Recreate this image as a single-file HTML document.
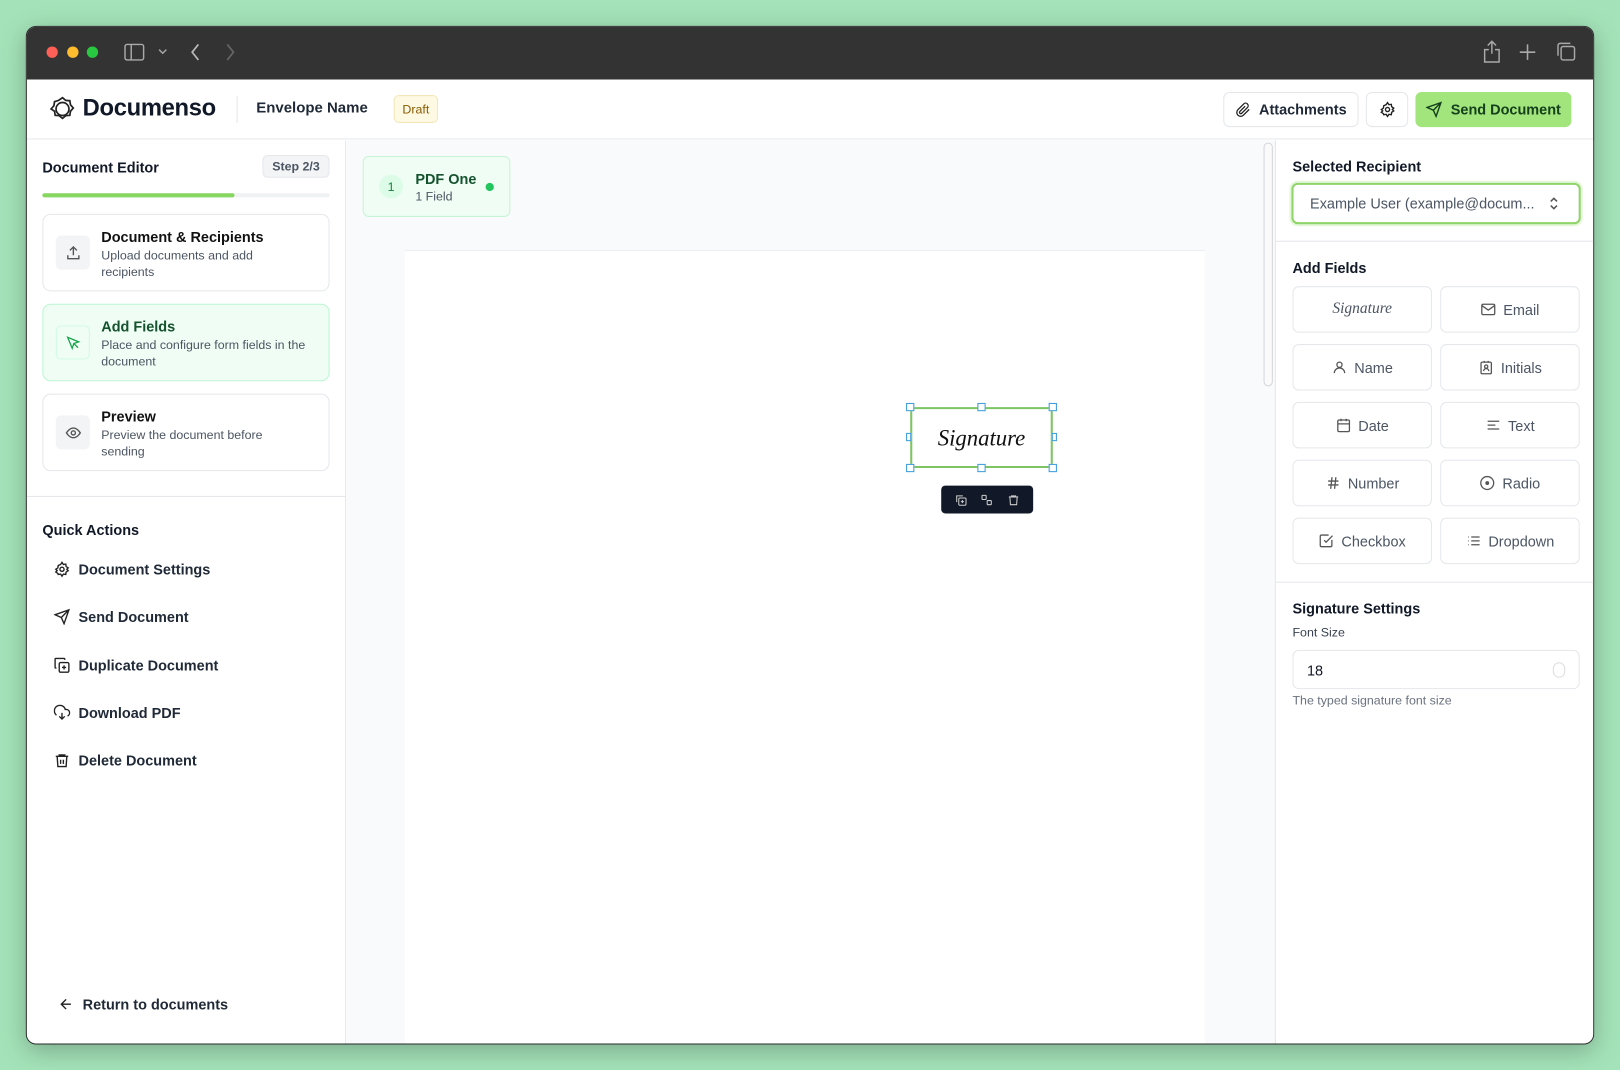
<!DOCTYPE html>
<html><head><meta charset="utf-8"><style>
*{box-sizing:border-box;margin:0;padding:0}
html,body{width:1620px;height:1070px;overflow:hidden;background:#a4e3b9;font-family:"Liberation Sans",sans-serif;color:#111827}
#w{position:absolute;left:0;top:0;width:1568px;height:1036px;transform:scale(1.03316);transform-origin:0 0}
.a{position:absolute}
.win{left:25px;top:25px;width:1518px;height:986px;border-radius:10px;overflow:hidden;background:#fff;box-shadow:0 6px 24px rgba(0,0,0,.25);border:1px solid #2a2a2a}
.tb{left:0;top:0;width:100%;height:51px;background:#333}
.dot{width:11px;height:11px;border-radius:50%;top:19px}
.card{left:15px;width:278px;border:1px solid #e5e7eb;border-radius:8px;background:#fff}
.ib{left:12px;width:33px;height:33px;border-radius:5px;background:#f3f4f6;display:flex;align-items:center;justify-content:center}
.ct{left:56px;font-size:14px;font-weight:bold;color:#111}
.cd{left:56px;font-size:12px;color:#4b5563;line-height:16px;width:200px}
.qa{left:26px;font-size:14px;font-weight:bold;color:#1f2937;display:flex;align-items:center;gap:8px}
.fb{width:135px;height:45px;border:1px solid #e5e7eb;border-radius:6px;display:flex;align-items:center;justify-content:center;gap:7px;font-size:14px;color:#4b5563}
.h{width:8px;height:8px;border:1px solid #3b9bd9;background:#fff}
svg{display:block}
</style></head><body><div id="w">
<div class="a win">
 <div class="a tb">
  <div class="a dot" style="left:19px;background:#fe5f57"></div>
  <div class="a dot" style="left:39px;background:#febc2e"></div>
  <div class="a dot" style="left:58px;background:#28c840"></div>
  <svg class="a" style="left:94px;top:16px" width="20" height="17" viewBox="0 0 20 17" fill="none" stroke="#aaa" stroke-width="1.4"><rect x="1" y="1" width="18" height="15" rx="2"/><path d="M7 1v15"/></svg>
  <svg class="a" style="left:127px;top:21px" width="9" height="6" viewBox="0 0 9 6" fill="none" stroke="#aaa" stroke-width="1.4"><path d="M1 1l3.5 3.5L8 1"/></svg>
  <svg class="a" style="left:158px;top:16px" width="10" height="17" viewBox="0 0 10 17" fill="none" stroke="#bbb" stroke-width="1.6"><path d="M8 1L2 8.5 8 16"/></svg>
  <svg class="a" style="left:192px;top:16px" width="10" height="17" viewBox="0 0 10 17" fill="none" stroke="#666" stroke-width="1.6"><path d="M2 1l6 7.5L2 16"/></svg>
  <svg class="a" style="left:1409px;top:13px" width="18" height="22" viewBox="0 0 18 22" fill="none" stroke="#aaa" stroke-width="1.4"><path d="M9 1v12M5 5l4-4 4 4M6 9H2v12h14V9h-4"/></svg>
  <svg class="a" style="left:1444px;top:16px" width="17" height="17" viewBox="0 0 17 17" stroke="#aaa" stroke-width="1.5"><path d="M8.5 1v15M1 8.5h15"/></svg>
  <svg class="a" style="left:1480px;top:14px" width="20" height="20" viewBox="0 0 20 20" fill="none" stroke="#aaa" stroke-width="1.4"><rect x="5" y="5" width="13" height="13" rx="2"/><path d="M2 14V4a2 2 0 0 1 2-2h10"/></svg>
 </div>
 <!-- header -->
 <div class="a" style="left:0;top:51px;width:100%;height:58px;border-bottom:1px solid #e5e7eb;background:#fff">
  <svg class="a" style="left:22px;top:16px" width="25" height="25" viewBox="0 0 24 24" fill="none" stroke="#222" stroke-width="1.6"><path d="M12 1.5l3 2.5 3.8.3.6 3.8 2.6 3-2.6 3-.6 3.8-3.8.3-3 2.5-3-2.5-3.8-.3-.6-3.8L1.4 12 4 9l.6-3.8L8.4 4z"/><circle cx="12" cy="12" r="6"/></svg>
  <div class="a" style="left:54px;top:14px;font-size:23px;font-weight:bold;letter-spacing:-.3px">Documenso</div>
  <div class="a" style="left:203px;top:16px;width:1px;height:26px;background:#e5e7eb"></div>
  <div class="a" style="left:222px;top:20px;font-size:14.5px;font-weight:bold;color:#1f2937">Envelope Name</div>
  <div class="a" style="left:355px;top:15px;width:43px;height:27px;background:#fef9e3;border:1px solid #f3e7b8;border-radius:5px;font-size:12px;color:#8a5a00;display:flex;align-items:center;justify-content:center">Draft</div>
  <div class="a" style="left:1158px;top:12px;width:131px;height:34px;border:1px solid #e5e7eb;border-radius:6px;display:flex;align-items:center;justify-content:center;gap:8px;font-size:14px;font-weight:bold;color:#1f2937"><svg width="15" height="15" viewBox="0 0 24 24" fill="none" stroke="#222" stroke-width="2"><path d="M21 11l-9 9a6 6 0 0 1-8.5-8.5l9-9a4 4 0 0 1 5.7 5.7l-9 9a2 2 0 0 1-2.8-2.8l8.3-8.3"/></svg>Attachments</div>
  <div class="a" style="left:1296px;top:12px;width:41px;height:34px;border:1px solid #e5e7eb;border-radius:6px;display:flex;align-items:center;justify-content:center"><svg width="16" height="16" viewBox="0 0 24 24" fill="none" stroke="#222" stroke-width="2"><circle cx="12" cy="12" r="3"/><path d="M12 2l2 3 3.5-.5.5 3.5 3 2-2 2 2 2-3 2-.5 3.5-3.5-.5-2 3-2-3-3.5.5L6 18l-3-2 2-2-2-2 3-2 .5-3.5L10 5z"/></svg></div>
  <div class="a" style="left:1344px;top:12px;width:151px;height:34px;background:#a2e57c;border-radius:6px;display:flex;align-items:center;justify-content:center;gap:8px;font-size:14px;font-weight:bold;color:#14401c"><svg width="16" height="16" viewBox="0 0 24 24" fill="none" stroke="#14401c" stroke-width="2"><path d="M22 2L11 13M22 2l-7 20-4-9-9-4z"/></svg>Send Document</div>
 </div>
 <!-- left sidebar -->
 <div class="a" style="left:0;top:110px;width:309px;height:876px;border-right:1px solid #e5e7eb;background:#fff">
  <div class="a" style="left:15px;top:18px;font-size:14px;font-weight:bold">Document Editor</div>
  <div class="a" style="left:228px;top:14px;width:65px;height:22px;background:#f3f4f6;border:1px solid #e5e7eb;border-radius:5px;font-size:12px;font-weight:bold;color:#4b5563;display:flex;align-items:center;justify-content:center">Step 2/3</div>
  <div class="a" style="left:15px;top:51px;width:278px;height:4px;background:#f0f1f3;border-radius:2px"></div>
  <div class="a" style="left:15px;top:51px;width:186px;height:4px;background:#86d65f;border-radius:2px"></div>
  <div class="a card" style="top:71px;height:75px"><div class="a ib" style="top:20px"><svg width="16" height="16" viewBox="0 0 24 24" fill="none" stroke="#555" stroke-width="2"><path d="M12 15V3M7 8l5-5 5 5M4 15v5h16v-5"/></svg></div><div class="a ct" style="top:13px">Document &amp; Recipients</div><div class="a cd" style="top:31px;width:175px">Upload documents and add recipients</div></div>
  <div class="a card" style="top:158px;height:75px;background:#f0fdf4;border-color:#bbf7d0"><div class="a ib" style="top:20px;background:#f0fdf4;border:1px solid #d1fae5"><svg width="15" height="15" viewBox="0 0 24 24" fill="none" stroke="#16a34a" stroke-width="2"><path d="M4 4l7 17 2.5-7.5L21 11z M14 14l6 6"/></svg></div><div class="a ct" style="top:13px;color:#14532d">Add Fields</div><div class="a cd" style="top:31px">Place and configure form fields in the document</div></div>
  <div class="a card" style="top:245px;height:75px"><div class="a ib" style="top:20px"><svg width="16" height="16" viewBox="0 0 24 24" fill="none" stroke="#555" stroke-width="2"><path d="M2 12s4-7 10-7 10 7 10 7-4 7-10 7S2 12 2 12z"/><circle cx="12" cy="12" r="3"/></svg></div><div class="a ct" style="top:13px">Preview</div><div class="a cd" style="top:31px;width:175px">Preview the document before sending</div></div>
  <div class="a" style="left:0;top:344px;width:309px;height:1px;background:#e5e7eb"></div>
  <div class="a" style="left:15px;top:369px;font-size:14px;font-weight:bold">Quick Actions</div>
  <div class="a qa" style="top:407px"><svg width="16" height="16" viewBox="0 0 24 24" fill="none" stroke="#222" stroke-width="2"><circle cx="12" cy="12" r="3"/><path d="M12 2l2 3 3.5-.5.5 3.5 3 2-2 2 2 2-3 2-.5 3.5-3.5-.5-2 3-2-3-3.5.5L6 18l-3-2 2-2-2-2 3-2 .5-3.5L10 5z"/></svg>Document Settings</div>
  <div class="a qa" style="top:453px"><svg width="16" height="16" viewBox="0 0 24 24" fill="none" stroke="#222" stroke-width="2"><path d="M22 2L11 13M22 2l-7 20-4-9-9-4z"/></svg>Send Document</div>
  <div class="a qa" style="top:500px"><svg width="16" height="16" viewBox="0 0 24 24" fill="none" stroke="#222" stroke-width="2"><rect x="8" y="8" width="14" height="14" rx="2"/><path d="M4 16H3a1 1 0 0 1-1-1V3a1 1 0 0 1 1-1h12a1 1 0 0 1 1 1v1M15 12v6M12 15h6"/></svg>Duplicate Document</div>
  <div class="a qa" style="top:546px"><svg width="16" height="16" viewBox="0 0 24 24" fill="none" stroke="#222" stroke-width="2"><path d="M12 12v9M8 17l4 4 4-4M20 16.6A5 5 0 0 0 18 7h-1.3A8 8 0 1 0 4 15.3"/></svg>Download PDF</div>
  <div class="a qa" style="top:592px"><svg width="16" height="16" viewBox="0 0 24 24" fill="none" stroke="#222" stroke-width="2"><path d="M3 6h18M8 6V4h8v2M5 6l1 15h12l1-15M10 11v6M14 11v6"/></svg>Delete Document</div>
  <div class="a qa" style="left:30px;top:828px"><svg width="16" height="16" viewBox="0 0 24 24" fill="none" stroke="#222" stroke-width="2"><path d="M19 12H5M12 19l-7-7 7-7"/></svg>Return to documents</div>
 </div>
 <!-- center -->
 <div class="a" style="left:310px;top:110px;width:898px;height:876px;background:#f9fafb">
  <div class="a" style="left:15px;top:15px;width:143px;height:59px;background:#f0fdf4;border:1px solid #c7f3d6;border-radius:6px">
   <div class="a" style="left:15px;top:17px;width:23px;height:23px;border-radius:50%;background:#dcfce7;font-size:12px;color:#15803d;display:flex;align-items:center;justify-content:center">1</div>
   <div class="a" style="left:50px;top:13px;font-size:14px;font-weight:bold;color:#14532d">PDF One</div>
   <div class="a" style="left:50px;top:31px;font-size:12px;color:#4b5563">1 Field</div>
   <div class="a" style="left:118px;top:25px;width:8px;height:8px;border-radius:50%;background:#22c55e"></div>
  </div>
  <div class="a" style="left:56px;top:106px;width:774px;height:780px;background:#fff;border-top:1px solid #eceef1"></div>
  <div class="a" style="left:887px;top:2px;width:9px;height:236px;border:1px solid #d4d6da;border-radius:5px;background:#fafafa"></div>
  <div class="a" style="left:545px;top:258px;width:138px;height:59px;border:2px solid #7cc464;border-radius:2px;background:#fff;display:flex;align-items:center;justify-content:center;font-family:'Liberation Serif',serif;font-style:italic;font-size:22px;color:#111">Signature</div>
  <div class="a h" style="left:541px;top:254px"></div><div class="a h" style="left:610px;top:254px"></div><div class="a h" style="left:679px;top:254px"></div>
  <div class="a h" style="left:541px;top:283px;width:5px"></div><div class="a h" style="left:682px;top:283px;width:5px"></div>
  <div class="a h" style="left:541px;top:313px"></div><div class="a h" style="left:610px;top:313px"></div><div class="a h" style="left:679px;top:313px"></div>
  <div class="a" style="left:575px;top:334px;width:89px;height:27px;background:#111827;border-radius:4px;display:flex;align-items:center;justify-content:space-around;padding:0 6px">
   <svg width="12" height="12" viewBox="0 0 24 24" fill="none" stroke="#ccc" stroke-width="2"><rect x="8" y="8" width="14" height="14" rx="2"/><path d="M4 16V4h12M15 12v6M12 15h6"/></svg>
   <svg width="12" height="12" viewBox="0 0 24 24" fill="none" stroke="#ccc" stroke-width="2"><rect x="3" y="3" width="8" height="8" rx="1"/><rect x="13" y="13" width="8" height="8" rx="1"/></svg>
   <svg width="12" height="12" viewBox="0 0 24 24" fill="none" stroke="#ccc" stroke-width="2"><path d="M3 6h18M8 6V4h8v2M5 6l1 15h12l1-15"/></svg>
  </div>
 </div>
 <!-- right -->
 <div class="a" style="left:1208px;top:110px;width:310px;height:876px;border-left:1px solid #e5e7eb;background:#fff">
  <div class="a" style="left:16px;top:17px;font-size:14px;font-weight:bold">Selected Recipient</div>
  <div class="a" style="left:15px;top:41px;width:280px;height:40px;border:2px solid #8fd46a;border-radius:6px;box-shadow:0 0 0 2px #e4f7d9;font-size:14px;color:#4b5563;padding:10px 0 0 16px">Example User (example@docum...</div>
  <svg class="a" style="left:264px;top:54px" width="10" height="14" viewBox="0 0 10 14" fill="none" stroke="#555" stroke-width="1.5"><path d="M2 5l3-3 3 3M2 9l3 3 3-3"/></svg>
  <div class="a" style="left:0;top:97px;width:310px;height:1px;background:#e5e7eb"></div>
  <div class="a" style="left:16px;top:115px;font-size:14px;font-weight:bold">Add Fields</div>
  <div class="a fb" style="left:16px;top:141px;font-family:'Liberation Serif',serif;font-style:italic;font-size:15px">Signature</div>
  <div class="a fb" style="left:159px;top:141px"><svg width="15" height="15" viewBox="0 0 24 24" fill="none" stroke="#555" stroke-width="2"><rect x="2" y="4" width="20" height="16" rx="2"/><path d="M2 6l10 7 10-7"/></svg>Email</div>
  <div class="a fb" style="left:16px;top:197px"><svg width="15" height="15" viewBox="0 0 24 24" fill="none" stroke="#555" stroke-width="2"><circle cx="12" cy="8" r="4"/><path d="M4 21a8 8 0 0 1 16 0"/></svg>Name</div>
  <div class="a fb" style="left:159px;top:197px"><svg width="15" height="15" viewBox="0 0 24 24" fill="none" stroke="#555" stroke-width="2"><rect x="4" y="4" width="16" height="18" rx="2"/><path d="M9 2v3M15 2v3"/><circle cx="12" cy="11" r="2.5"/><path d="M8 18a4 4 0 0 1 8 0"/></svg>Initials</div>
  <div class="a fb" style="left:16px;top:253px"><svg width="15" height="15" viewBox="0 0 24 24" fill="none" stroke="#555" stroke-width="2"><rect x="3" y="4" width="18" height="18" rx="2"/><path d="M16 2v4M8 2v4M3 10h18"/></svg>Date</div>
  <div class="a fb" style="left:159px;top:253px"><svg width="15" height="15" viewBox="0 0 24 24" fill="none" stroke="#555" stroke-width="2"><path d="M3 6h18M3 12h12M3 18h18"/></svg>Text</div>
  <div class="a fb" style="left:16px;top:309px"><svg width="15" height="15" viewBox="0 0 24 24" fill="none" stroke="#555" stroke-width="2"><path d="M4 9h16M4 15h16M10 3L8 21M16 3l-2 18"/></svg>Number</div>
  <div class="a fb" style="left:159px;top:309px"><svg width="15" height="15" viewBox="0 0 24 24" fill="none" stroke="#555" stroke-width="2"><circle cx="12" cy="12" r="10"/><circle cx="12" cy="12" r="2" fill="#555"/></svg>Radio</div>
  <div class="a fb" style="left:16px;top:365px"><svg width="15" height="15" viewBox="0 0 24 24" fill="none" stroke="#555" stroke-width="2"><path d="M21 10.5V19a2 2 0 0 1-2 2H5a2 2 0 0 1-2-2V5a2 2 0 0 1 2-2h11"/><path d="M9 11l3 3L22 4"/></svg>Checkbox</div>
  <div class="a fb" style="left:159px;top:365px"><svg width="15" height="15" viewBox="0 0 24 24" fill="none" stroke="#555" stroke-width="2"><path d="M8 6h13M8 12h13M8 18h13M3 6h1M3 12h1M3 18h1"/></svg>Dropdown</div>
  <div class="a" style="left:0;top:427px;width:310px;height:1px;background:#e5e7eb"></div>
  <div class="a" style="left:16px;top:445px;font-size:14px;font-weight:bold">Signature Settings</div>
  <div class="a" style="left:16px;top:469px;font-size:12px;color:#374151">Font Size</div>
  <div class="a" style="left:16px;top:493px;width:278px;height:38px;border:1px solid #e5e7eb;border-radius:6px;font-size:14px;padding:11px 0 0 13px">18</div>
  <div class="a" style="left:268px;top:505px;width:12px;height:15px;border:1px solid #ddd;border-radius:6px"></div>
  <div class="a" style="left:16px;top:535px;font-size:12px;color:#6b7280">The typed signature font size</div>
 </div>
</div>
</div></body></html>
